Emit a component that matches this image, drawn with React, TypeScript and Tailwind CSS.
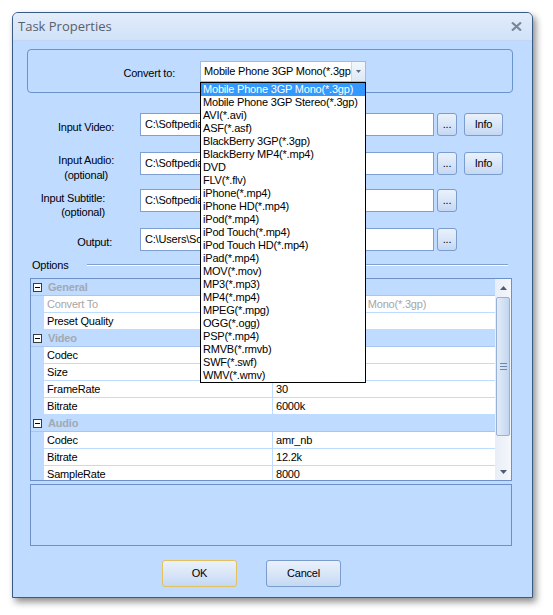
import React from "react";

const FORMATS = [
  "Mobile Phone 3GP Mono(*.3gp)",
  "Mobile Phone 3GP Stereo(*.3gp)",
  "AVI(*.avi)",
  "ASF(*.asf)",
  "BlackBerry 3GP(*.3gp)",
  "BlackBerry MP4(*.mp4)",
  "DVD",
  "FLV(*.flv)",
  "iPhone(*.mp4)",
  "iPhone HD(*.mp4)",
  "iPod(*.mp4)",
  "iPod Touch(*.mp4)",
  "iPod Touch HD(*.mp4)",
  "iPad(*.mp4)",
  "MOV(*.mov)",
  "MP3(*.mp3)",
  "MP4(*.mp4)",
  "MPEG(*.mpg)",
  "OGG(*.ogg)",
  "PSP(*.mp4)",
  "RMVB(*.rmvb)",
  "SWF(*.swf)",
  "WMV(*.wmv)",
];

type IProp = { name: string; value: string; disabled?: boolean };
type ISection = { title: string; props: IProp[] };

const SECTIONS: ISection[] = [
  {
    title: "General",
    props: [
      { name: "Convert To", value: "Mobile Phone 3GP Mono(*.3gp)", disabled: true },
      { name: "Preset Quality", value: "Normal" },
    ],
  },
  {
    title: "Video",
    props: [
      { name: "Codec", value: "h263" },
      { name: "Size", value: "176x144" },
      { name: "FrameRate", value: "30" },
      { name: "Bitrate", value: "6000k" },
    ],
  },
  {
    title: "Audio",
    props: [
      { name: "Codec", value: "amr_nb" },
      { name: "Bitrate", value: "12.2k" },
      { name: "SampleRate", value: "8000" },
    ],
  },
];

// blue "office" push button
const Btn = ({ children, className = "" }: { children: React.ReactNode; className?: string }) => (
  <div
    className={
      "flex items-center justify-center rounded-[3px] border bg-gradient-to-b from-[#eaf1fb] via-[#d9e6f8] to-[#c4d8f3] text-black " +
      className
    }
  >
    {children}
  </div>
);

const TextBox = ({ value }: { value: string }) => (
  <div className="w-[294px] h-[23px] border border-[#7f9fd2] bg-white flex items-center pl-[4px] overflow-hidden whitespace-nowrap">
    {value}
  </div>
);

const InputRow = ({ label, value, info }: { label: React.ReactNode; value: string; info?: boolean }) => (
  <div className="flex items-start h-[23px]">
    <div className="w-[127px] flex justify-end">{label}</div>
    <TextBox value={value} />
    <Btn className="ml-[3px] w-[20px] h-[23px] border-[#7b9dcd] leading-[8px] pb-[2px]">...</Btn>
    {info && <Btn className="ml-[7px] w-[39px] h-[23px] border-[#7b9dcd]">Info</Btn>}
  </div>
);

const Scrollbar = () => (
  <div className="w-[16px] flex flex-col bg-gradient-to-r from-[#e8eef7] to-[#f4f7fb]">
    <div className="h-[17px] flex items-center justify-center">
      <svg width="7" height="4" viewBox="0 0 7 4">
        <path d="M0 4 L3.5 0 L7 4 Z" fill="#4d5d72" />
      </svg>
    </div>
    <div className="mt-[1px] mx-[1px] h-[139px] rounded-[2px] border border-[#98b1d6] bg-gradient-to-r from-[#e3ecf8] via-[#d3e1f4] to-[#c2d5ef] flex flex-col items-center justify-center gap-[2px]">
      <div className="w-[7px] h-[1px] bg-[#6d86ab]" />
      <div className="w-[7px] h-[1px] bg-[#6d86ab]" />
      <div className="w-[7px] h-[1px] bg-[#6d86ab]" />
    </div>
    <div className="mt-auto h-[17px] flex items-center justify-center">
      <svg width="7" height="4" viewBox="0 0 7 4">
        <path d="M0 0 L3.5 4 L7 0 Z" fill="#4d5d72" />
      </svg>
    </div>
  </div>
);

const PropertyGrid = () => (
  <div className="ml-[17px] mt-[6px] w-[482px] h-[203px] shrink-0 border border-[#6e90c8] bg-[#bfdbff] flex overflow-hidden">
    <div className="w-[464px]">
      {SECTIONS.map((section) => (
        <div key={section.title}>
          <div className="h-[17px] flex items-center border-b border-[#a9c6ee]">
            <div className="ml-[2px] w-[9px] h-[9px] border border-[#3c3c3c] bg-white flex items-center justify-center">
              <div className="w-[5px] h-[1px] bg-black" />
            </div>
            <span className="ml-[6px] font-bold text-[#a2a9b2]">{section.title}</span>
          </div>
          {section.props.map((p) => (
            <div key={section.title + p.name} className="h-[17px] flex">
              <div className="w-[13px]" />
              <div
                className={
                  "w-[229px] bg-white border-b border-r border-[#bfdbff] pl-[3px] flex items-center whitespace-nowrap " +
                  (p.disabled ? "text-[#a6a6a6]" : "text-black")
                }
              >
                {p.name}
              </div>
              <div
                className={
                  "w-[222px] bg-white border-b border-[#bfdbff] pl-[3px] flex items-center whitespace-nowrap overflow-hidden " +
                  (p.disabled ? "text-[#a6a6a6]" : "text-black")
                }
              >
                {p.value}
              </div>
            </div>
          ))}
        </div>
      ))}
    </div>
    <Scrollbar />
  </div>
);

const App = () => {
  return (
    <div className="w-[553px] h-[615px] bg-white pt-[12px] pl-[12px] overflow-hidden font-['Liberation_Sans',Arial,sans-serif] text-[11px] tracking-[-0.2px] text-black">
      <div className="w-[521px] h-[586px] border border-[#3a5a86] rounded-t-[6px] bg-[#bfdbff] shadow-[3px_4px_7px_rgba(0,0,0,0.45)] flex flex-col">
        {/* title bar */}
        <div className="h-[28px] shrink-0 rounded-t-[5px] bg-gradient-to-b from-[#e3edfb] via-[#d9e7f9] to-[#d1e2f8] border-b border-[#c2d7f3] flex items-center justify-between pl-[5px] pr-[10px]">
          <span className="font-['Open_Sans',sans-serif] text-[13px] tracking-normal text-[#56606e]">Task Properties</span>
          <svg width="11" height="9" viewBox="0 0 11 9">
            <path d="M1 0.5 L10 8.5 M10 0.5 L1 8.5" stroke="#7a879b" strokeWidth="2.2" />
          </svg>
        </div>

        {/* body */}
        <div className="relative flex-1 flex flex-col">
          <div className="ml-[14px] mt-[8px] w-[486px] h-[44px] shrink-0 border border-[#6a92cb] rounded-[4px] flex items-start pt-[11px]">
            <div className="w-[172px] text-right pr-[25px] pt-[4px]">Convert to:</div>
            <div className="w-[166px] h-[21px] border border-[#a1badf] bg-white flex">
              <div className="flex-1 pl-[3px] flex items-center overflow-hidden whitespace-nowrap">Mobile Phone 3GP Mono(*.3gp)</div>
              <div className="w-[14px] border-l border-[#c9d8ee] bg-gradient-to-b from-[#f3f7fc] to-[#dde8f6] flex items-center justify-center">
                <svg width="5" height="3" viewBox="0 0 5 3">
                  <path d="M0 0 L2.5 3 L5 0 Z" fill="#5b6a80" />
                </svg>
              </div>
            </div>
          </div>

          <div className="mt-[20px]">
            <InputRow
              label={<div className="mr-[26px] mt-[6px]">Input Video:</div>}
              value="C:\Softpedia\Softpedia.avi"
              info
            />
          </div>
          <div className="mt-[16px]">
            <InputRow
              label={<div className="mr-[26px] mt-[1px] text-center leading-[15px]">Input Audio:<br />(optional)</div>}
              value="C:\Softpedia\Softpedia.mp3"
              info
            />
          </div>
          <div className="mt-[14px]">
            <InputRow
              label={<div className="mr-[35px] mt-[2px] text-right leading-[14px]">Input Subtitle:<br />(optional)</div>}
              value="C:\Softpedia\Softpedia.srt"
            />
          </div>
          <div className="mt-[16px]">
            <InputRow
              label={<div className="mr-[28px] mt-[6px]">Output:</div>}
              value="C:\Users\Softpedia\Desktop"
            />
          </div>

          <div className="mt-[7px] ml-[19px] h-[14px] shrink-0 flex items-center">
            <div className="w-[55px]">Options</div>
            <div className="w-[421px] h-[2px] border-t border-[#7d9fd3] border-b border-b-white" />
          </div>

          <PropertyGrid />

          <div className="ml-[17px] mt-[3px] w-[482px] h-[62px] shrink-0 border border-[#6e90c8]" />

          <div className="mt-[14px] ml-[149px] flex gap-[29px]">
            <Btn className="w-[75px] h-[27px] border-[#e2c15e]">OK</Btn>
            <Btn className="w-[75px] h-[27px] border-[#7b9dcd]">Cancel</Btn>
          </div>

          {/* open combo list */}
          <div className="absolute left-[187px] top-[41px] w-[166px] border border-black bg-white">
            {FORMATS.map((f, i) => (
              <div
                key={f}
                className={
                  "h-[13px] leading-[13px] pl-[2px] whitespace-nowrap " +
                  (i === 0 ? "bg-[#3399ff] text-white" : "text-black")
                }
              >
                {f}
              </div>
            ))}
          </div>
        </div>
      </div>
    </div>
  );
};

export default App;
